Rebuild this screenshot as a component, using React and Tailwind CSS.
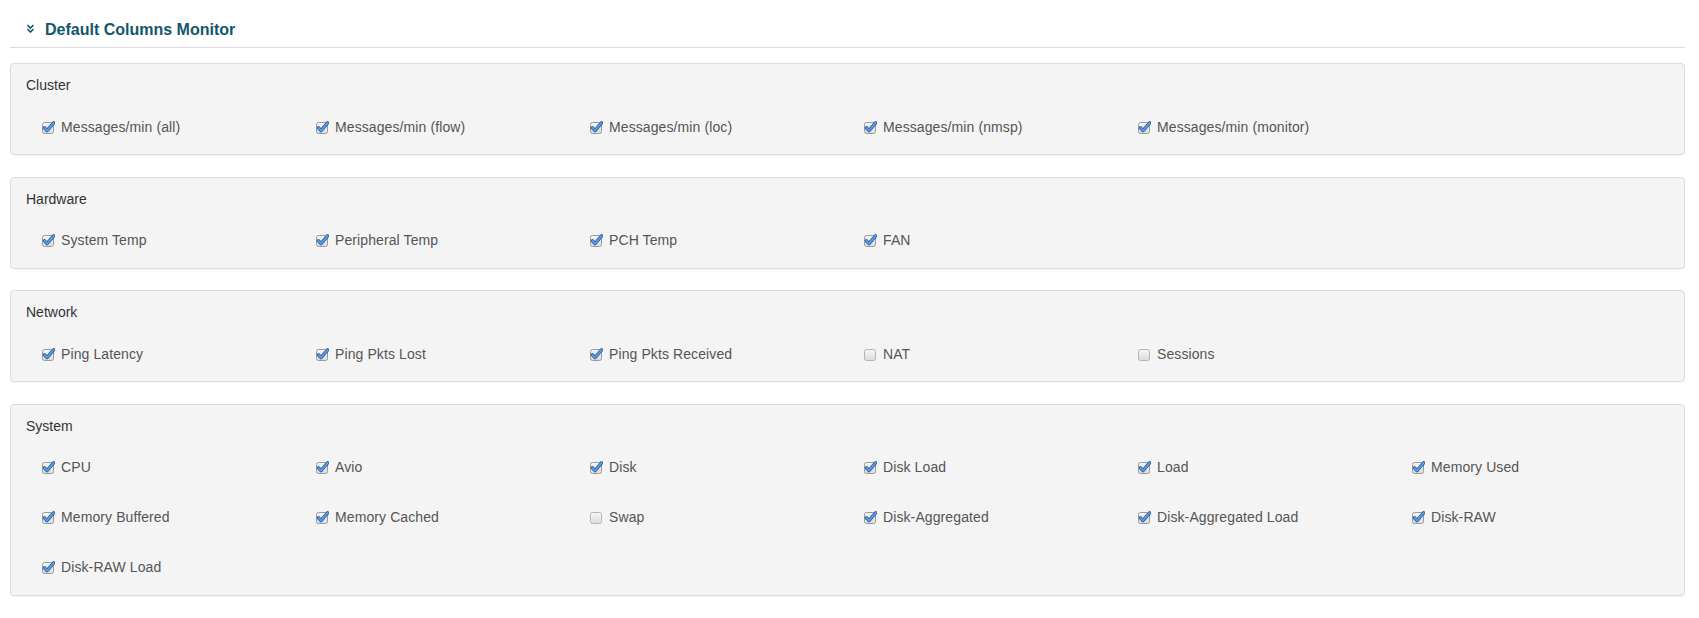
import React from 'react';

const GROUPS = [
  {
    name: 'Cluster',
    items: [
      ['Messages/min (all)', true],
      ['Messages/min (flow)', true],
      ['Messages/min (loc)', true],
      ['Messages/min (nmsp)', true],
      ['Messages/min (monitor)', true],
    ],
  },
  {
    name: 'Hardware',
    items: [
      ['System Temp', true],
      ['Peripheral Temp', true],
      ['PCH Temp', true],
      ['FAN', true],
    ],
  },
  {
    name: 'Network',
    items: [
      ['Ping Latency', true],
      ['Ping Pkts Lost', true],
      ['Ping Pkts Received', true],
      ['NAT', false],
      ['Sessions', false],
    ],
  },
  {
    name: 'System',
    items: [
      ['CPU', true],
      ['Avio', true],
      ['Disk', true],
      ['Disk Load', true],
      ['Load', true],
      ['Memory Used', true],
      ['Memory Buffered', true],
      ['Memory Cached', true],
      ['Swap', false],
      ['Disk-Aggregated', true],
      ['Disk-Aggregated Load', true],
      ['Disk-RAW', true],
      ['Disk-RAW Load', true],
    ],
  },
];

function Box({ checked }) {
  return (
    <svg width="13" height="13" viewBox="0 0 13 13" className="shrink-0">
      <defs>
        <linearGradient id="cbg" x1="0" y1="0" x2="0" y2="1">
          <stop offset="0" stopColor="#f6f6f6" />
          <stop offset="1" stopColor="#dcdcdc" />
        </linearGradient>
      </defs>
      <rect x="0.5" y="1.5" width="11" height="11" rx="2" fill="url(#cbg)" stroke={checked ? '#9a9a9a' : '#b4b4b4'} />
      {checked && (
        <>
          <path d="M2.5 6.8 L5 9.6 L11.6 1.8" fill="none" stroke="#2c5f9e" strokeWidth="3.4" strokeLinecap="round" strokeLinejoin="round" />
          <path d="M2.5 6.8 L5 9.6 L11.6 1.8" fill="none" stroke="#5b9be6" strokeWidth="1.8" strokeLinecap="round" strokeLinejoin="round" />
        </>
      )}
    </svg>
  );
}

function Panel({ group }) {
  return (
    <div className="mb-[21.5px] rounded-[4px] border border-[#dcdcdc] bg-[#f4f4f4] px-[15px] pt-[11px] pb-[2px] shadow-[0_1px_1px_rgba(0,0,0,0.04)]">
      <div className="h-[20px] leading-[20px] text-[14px] text-[#333]">{group.name}</div>
      <div className="mt-[7px] grid grid-cols-[repeat(6,274px)] pl-[16px]">
        {group.items.map(([label, checked]) => (
          <label key={label} className="flex h-[50px] items-center gap-[6px] text-[14px] tracking-[0.1px] text-[#555]">
            <Box checked={checked} />
            <span>{label}</span>
          </label>
        ))}
      </div>
    </div>
  );
}

export default function App() {
  return (
    <div className="min-h-[618px] bg-white font-['Liberation_Sans',Arial,sans-serif]">
      <div className="ml-[10px] mr-[14px]">
        <div className="flex h-[48px] items-center border-b border-[#dddddd] pt-[12px]">
          <svg width="9" height="9" viewBox="0 0 9 9" className="ml-[16px] mr-[10px] mt-[-2px]">
            <path d="M1.5 1 L4.5 4 L7.5 1 M1.5 5 L4.5 8 L7.5 5" fill="none" stroke="#11576a" strokeWidth="1.6" />
          </svg>
          <h1 className="text-[16px] font-bold text-[#11576a]">Default Columns Monitor</h1>
        </div>
        <div className="mt-[15px]">
          {GROUPS.map((g) => (
            <Panel key={g.name} group={g} />
          ))}
        </div>
      </div>
    </div>
  );
}
